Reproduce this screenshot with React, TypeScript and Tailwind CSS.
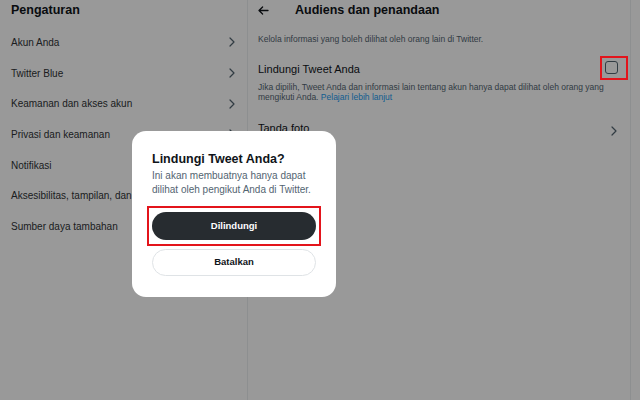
import React from "react";

const Chevron = ({ className = "" }: { className?: string }) => (
  <svg width="6" height="10" viewBox="0 0 6 10" className={className} fill="none">
    <path d="M1 1l4 4-4 4" stroke="#536471" strokeWidth="1.2" strokeLinecap="round" strokeLinejoin="round" />
  </svg>
);

const items = [
  "Akun Anda",
  "Twitter Blue",
  "Keamanan dan akses akun",
  "Privasi dan keamanan",
  "Notifikasi",
  "Aksesibilitas, tampilan, dan bahasa",
  "Sumber daya tambahan",
];

export default function App() {
  return (
    <div
      className="relative w-[640px] h-[400px] overflow-hidden bg-white flex"
      style={{ fontFamily: '"Liberation Sans", Arial, sans-serif' }}
    >
      {/* Left column */}
      <div className="w-[248px] shrink-0 border-r border-[#eceff1] flex flex-col">
        <div className="h-[27px] pl-[11px] pt-[1px]">
          <div className="text-[12.5px] leading-[18px] font-bold text-[#0f1419]">Pengaturan</div>
        </div>
        {items.map((t, i) => (
          <div key={t} className="h-[30.7px] flex items-center justify-between pl-[11px] pr-[12px]">
            <span className="text-[10px] text-[#2f3336] whitespace-nowrap">{t}</span>
            {i < 4 ? <Chevron /> : null}
          </div>
        ))}
      </div>

      {/* Right column */}
      <div className="w-[383px] shrink-0 border-r border-[#eceff1] pl-[10px] pr-[12px] flex flex-col">
        <div className="h-[20px] flex items-center">
          <svg width="11" height="9" viewBox="0 0 11 9" fill="none">
            <path d="M10 4.5H1.2M4.6 1L1 4.5 4.6 8" stroke="#0f1419" strokeWidth="1.3" strokeLinecap="round" strokeLinejoin="round" />
          </svg>
          <span className="ml-[26px] text-[12.5px] font-bold text-[#0f1419]">Audiens dan penandaan</span>
        </div>
        <div className="mt-[13px] text-[8.5px] leading-[12px] text-[#536471]">
          Kelola informasi yang boleh dilihat oleh orang lain di Twitter.
        </div>
        <div className="mt-[17px] h-[14px] flex items-center justify-between">
          <span className="text-[11px] text-[#0f1419]">Lindungi Tweet Anda</span>
          <div className="-mt-[4px] w-[13px] h-[13px] rounded-[3px] border-[1.5px] border-[#536471]" />
        </div>
        <div className="mt-[6px] text-[8.5px] leading-[10px] text-[#536471]">
          Jika dipilih, Tweet Anda dan informasi lain tentang akun hanya dapat dilihat oleh orang yang mengikuti Anda.{" "}
          <span className="text-[#1d9bf0]">Pelajari lebih lanjut</span>
        </div>
        <div className="mt-[20px] flex items-start justify-between">
          <span className="text-[11px] leading-[12px] text-[#0f1419]">Tanda foto</span>
          <Chevron className="mt-[4px] mr-[1px]" />
        </div>
      </div>
      <div className="flex-1" />

      {/* Dim overlay */}
      <div className="absolute inset-0 bg-black/40" />

      {/* Red annotation around checkbox */}
      <div className="absolute left-[600px] top-[56px] w-[28px] h-[24px] border-2 border-[#e3141b]" />

      {/* Modal */}
      <div className="absolute left-[132px] top-[131px] w-[204px] h-[166px] rounded-[14px] bg-white px-[20px] pt-[18px]">
        <div className="text-[12.5px] leading-[20px] font-bold text-[#0f1419]">Lindungi Tweet Anda?</div>
        <div className="text-[10px] leading-[14px] text-[#536471]">
          Ini akan membuatnya hanya dapat dilihat oleh pengikut Anda di Twitter.
        </div>
        <div className="mt-[9px] -mx-[5px] border-2 border-[#e3141b] px-[3px] py-[4px]">
          <div className="h-[28px] rounded-full bg-[#272c30] flex items-center justify-center text-[9.5px] font-bold text-white">
            Dilindungi
          </div>
        </div>
        <div className="mt-[3px] h-[27px] rounded-full border border-[#dfe3e6] flex items-center justify-center text-[9.5px] font-bold text-[#0f1419]">
          Batalkan
        </div>
      </div>
    </div>
  );
}
